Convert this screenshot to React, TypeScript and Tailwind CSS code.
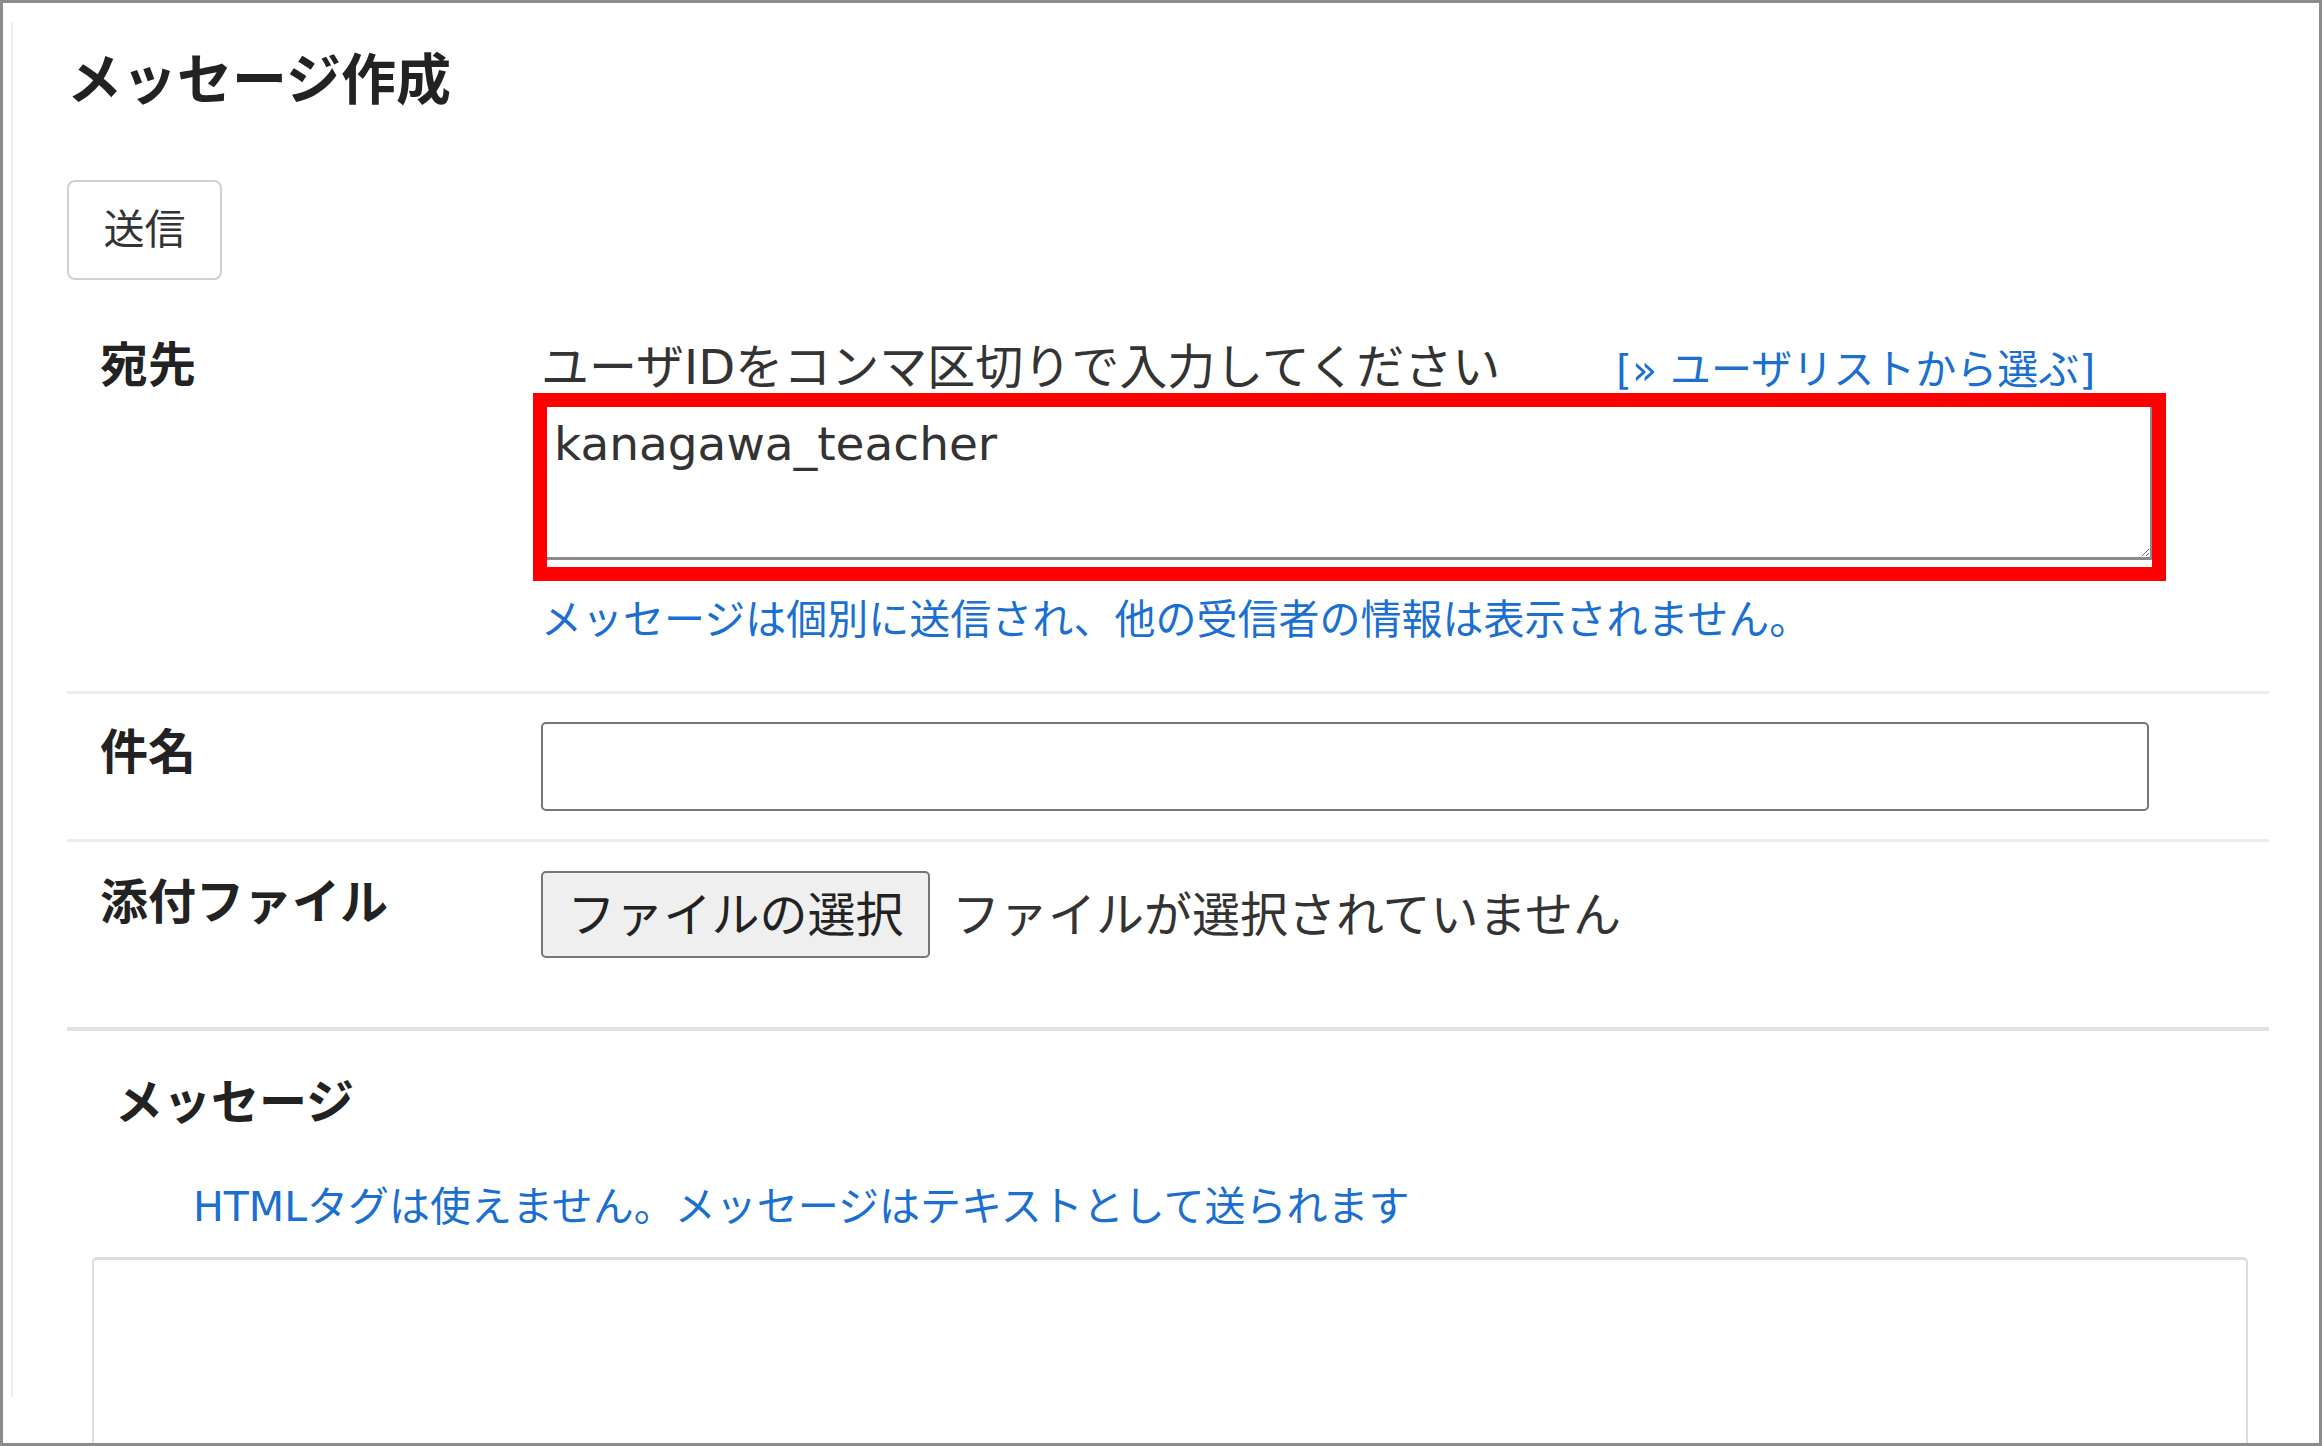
export default function App() {
  return (
    <div className="h-[1446px] w-[2322px] overflow-hidden border-[3px] border-[#8c8c8c] bg-white text-[#333] [font-family:'DejaVu_Sans','Noto_Sans_CJK_JP',sans-serif]">
      <div className="ml-[8px] mt-[19px] flex h-[1375px] flex-col border-l-2 border-[#eeeeee] pl-[54px] pt-[31px]">
        <h1 className="text-[55px] font-bold leading-none text-[#222]">メッセージ作成</h1>

        <div className="mt-[72px] flex">
          <button className="h-[100px] w-[155px] rounded-[8px] border-2 border-[#d0d0d0] bg-white text-[41px] leading-none text-[#333]">
            送信
          </button>
        </div>

        <div className="mt-[61px] w-[2202px]">
          {/* 宛先 */}
          <div className="flex border-b-[3px] border-[#ececec] pb-[50px]">
            <div className="w-[474px] shrink-0 pl-[33px] text-[48px] font-bold leading-none text-[#222]">宛先</div>
            <div className="flex-1">
              <div className="mt-[2px] flex items-baseline text-[48px] leading-none">
                <span className="w-[1075px] shrink-0">ユーザIDをコンマ区切りで入力してください</span>
                <a href="#" className="text-[41px] text-[#1a6fd0]">
                  [» ユーザリストから選ぶ]
                </a>
              </div>
              <div className="-ml-[8px] mt-[2px] w-[1633px] border-[14px] border-[#ff0000] pb-[7px]">
                <textarea
                  className="block h-[153px] w-full border-0 border-r-2 border-b-[3px] border-[#8a8a8a] pl-[7px] pt-[9px] text-[47px] leading-[1.2] text-[#333] outline-none"
                  defaultValue="kanagawa_teacher"
                />
              </div>
              <p className="mt-[19px] text-[41px] leading-none text-[#1a6fd0]">
                メッセージは個別に送信され、他の受信者の情報は表示されません。
              </p>
            </div>
          </div>

          {/* 件名 */}
          <div className="flex border-b-[3px] border-[#ececec] py-[28px]">
            <div className="mt-[6px] w-[474px] shrink-0 pl-[33px] text-[48px] font-bold leading-none text-[#222]">件名</div>
            <div className="flex-1">
              <input
                type="text"
                className="block h-[89px] w-[1608px] rounded-[5px] border-2 border-[#767676] bg-white px-[8px] text-[48px] outline-none"
              />
            </div>
          </div>

          {/* 添付ファイル */}
          <div className="flex border-b-4 border-[#e2e2e2] pt-[29px] pb-[69px]">
            <div className="mt-[7px] w-[474px] shrink-0 pl-[33px] text-[48px] font-bold leading-none text-[#222]">添付ファイル</div>
            <div className="flex flex-1 items-center">
              <button className="h-[87px] w-[389px] rounded-[5px] border-2 border-[#767676] bg-[#efefef] text-[48px] leading-none text-[#222]">
                ファイルの選択
              </button>
              <span className="ml-[22px] text-[48px] leading-none text-[#333]">ファイルが選択されていません</span>
            </div>
          </div>

          {/* メッセージ */}
          <div className="mt-[47px] pl-[48px] text-[48px] font-bold leading-none text-[#222]">メッセージ</div>
          <p className="mt-[61px] pl-[126px] text-[41px] leading-none text-[#1a6fd0]">
            HTMLタグは使えません。メッセージはテキストとして送られます
          </p>
          <textarea className="mt-[29px] ml-[25px] block h-[260px] w-[2156px] rounded-[5px] border-2 border-t-[3px] border-[#dcdcdc] outline-none" />
        </div>
      </div>
    </div>
  );
}
